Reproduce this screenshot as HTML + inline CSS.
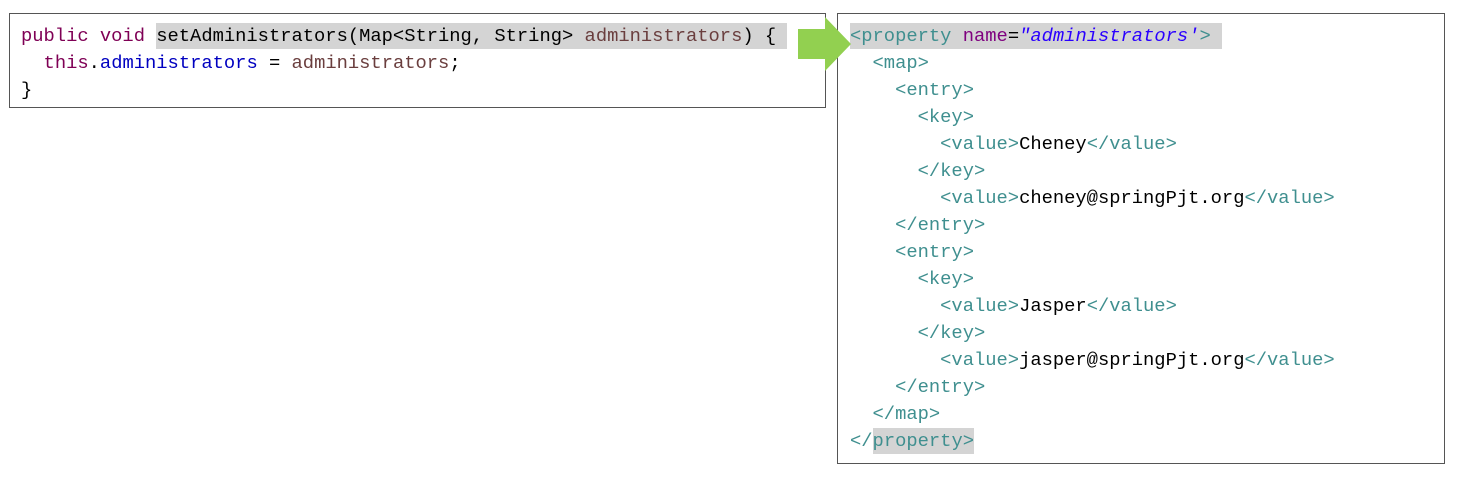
<!DOCTYPE html><html><head><style>
body{margin:0;width:1466px;height:483px;background:#fff;position:relative;font-family:"Liberation Mono",monospace;font-size:18.8px;}
.box{position:absolute;border:1px solid #555;box-sizing:border-box;}
.l{position:absolute;white-space:pre;line-height:27px;}
.k{color:#7f0055}.f{color:#0000c0}.p{color:#6a3e3e}.t{color:#3f8f8f}.a{color:#7f007f}.v{color:#2a00ff;font-style:italic}
.hl{background:#d4d4d4;padding:2px 0}
</style></head><body>
<div class="box" style="left:9px;top:13px;width:817px;height:95px"></div>
<div class="box" style="left:837px;top:13px;width:608px;height:451px"></div>
<div class="l" style="left:21px;top:23px"><span class="k">public void </span><span class="hl">setAdministrators(Map&lt;String, String&gt; <span class="p">administrators</span>) { </span>
  <span class="k">this</span>.<span class="f">administrators</span> = <span class="p">administrators</span>;
}</div>
<div class="l" style="left:850px;top:23px"><span class="hl"><span class="t">&lt;property </span><span class="a">name</span>=<span class="v">"administrators'</span><span class="t">&gt;</span> </span>
<span class="t">  &lt;map&gt;
    &lt;entry&gt;
      &lt;key&gt;
        &lt;value&gt;</span>Cheney<span class="t">&lt;/value&gt;
      &lt;/key&gt;
        &lt;value&gt;</span>cheney@springPjt.org<span class="t">&lt;/value&gt;
    &lt;/entry&gt;
    &lt;entry&gt;
      &lt;key&gt;
        &lt;value&gt;</span>Jasper<span class="t">&lt;/value&gt;
      &lt;/key&gt;
        &lt;value&gt;</span>jasper@springPjt.org<span class="t">&lt;/value&gt;
    &lt;/entry&gt;
  &lt;/map&gt;
&lt;/<span class="hl">property&gt;</span></span></div>
<svg style="position:absolute;left:798px;top:17px" width="54" height="54"><polygon points="0,12 27,12 27,0 53,27 27,54 27,42 0,42" fill="#92d050"/></svg>
</body></html>
